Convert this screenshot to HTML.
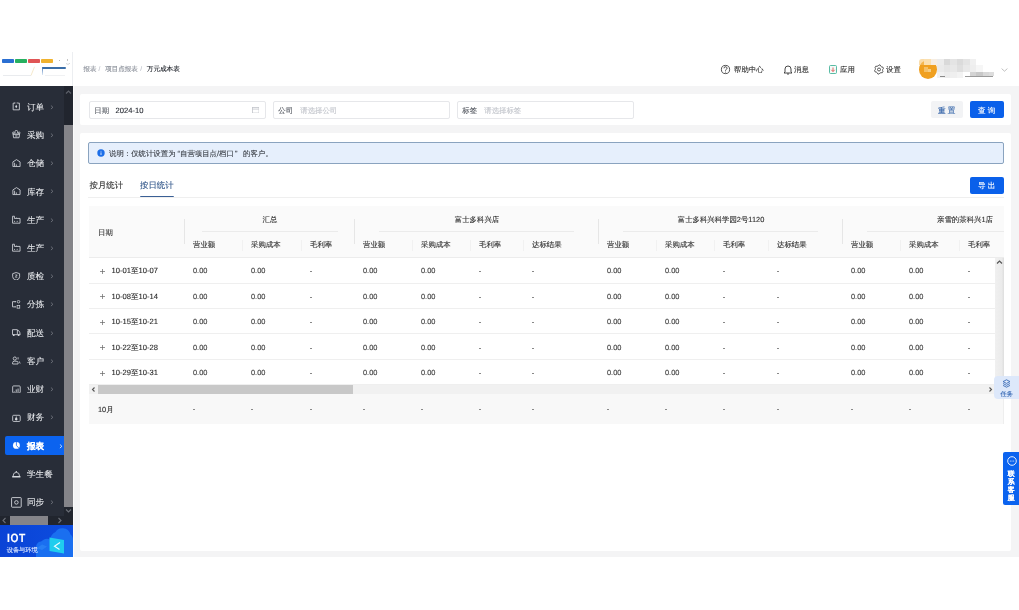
<!DOCTYPE html>
<html><head><meta charset="utf-8"><style>
*{box-sizing:border-box;margin:0;padding:0}
html,body{width:1019px;height:610px;overflow:hidden;background:#fff;font-family:"Liberation Sans",sans-serif;text-rendering:geometricPrecision}
.abs{position:absolute}
.t{position:absolute;white-space:nowrap;line-height:1;-webkit-text-stroke-width:.12px}
</style></head><body><div style="position:absolute;left:0;top:0;width:1019px;height:610px;will-change:transform">

<div class="abs" style="left:0;top:52px;width:73px;height:34px;background:#fff;border-right:1px solid #eceef1"></div>
<div class="abs" style="left:2.0px;top:59px;width:12px;height:3.8px;background:#2a6fd2;border-radius:.8px"></div>
<div class="abs" style="left:15.1px;top:59px;width:12px;height:3.8px;background:#27b060;border-radius:.8px"></div>
<div class="abs" style="left:28.2px;top:59px;width:12px;height:3.8px;background:#e05555;border-radius:.8px"></div>
<div class="abs" style="left:41.3px;top:59px;width:12px;height:3.8px;background:#f0b22e;border-radius:.8px"></div>
<div class="abs" style="left:42.3px;top:67px;width:23.7px;height:1.5px;background:#3a6ea8;border-radius:0 1px 1px 0"></div>
<div class="abs" style="left:41.9px;top:67px;width:1.3px;height:7.5px;background:linear-gradient(#4a7ab8,rgba(90,140,200,.2))"></div>
<div class="abs" style="left:58.6px;top:59.8px;width:1px;height:1.2px;background:#bbb"></div>
<div class="abs" style="left:67.2px;top:58.9px;width:.9px;height:2.6px;background:#c4c4c4"></div>
<svg class="abs" style="left:65px;top:62px" width="6" height="4" viewBox="0 0 6 4"><path d="M1 1.5Q3 3.5 5 1.2" fill="none" stroke="#ccc" stroke-width=".8"/></svg>
<div class="abs" style="left:3px;top:75.3px;width:28px;height:.8px;background:#e9ebee"></div>
<svg class="abs" style="left:30px;top:66px" width="6" height="10" viewBox="0 0 6 10"><path d="M1 9.5 4.5 .8" stroke="#f3e3bf" stroke-width=".8"/></svg>
<div class="abs" style="left:45px;top:75px;width:20px;height:.8px;background:#f0f1f3"></div>
<div class="abs" style="left:73px;top:52px;width:946px;height:34px;background:#fff"></div>
<div class="t" style="left:83.5px;top:66.5px;font-size:6.5px;color:#8a8f99">报表</div>
<div class="t" style="left:98.5px;top:66.5px;font-size:6.5px;color:#c0c4cc">/</div>
<div class="t" style="left:105.3px;top:66.5px;font-size:6.5px;color:#8a8f99">项目点报表</div>
<div class="t" style="left:140.3px;top:66.5px;font-size:6.5px;color:#c0c4cc">/</div>
<div class="t" style="left:146.8px;top:66.5px;font-size:6.6px;color:#1d2129">万元成本表</div>
<svg class="abs" style="left:720px;top:64px" width="11" height="11" viewBox="0 0 11 11"><circle cx="5.5" cy="5.5" r="4.1" fill="none" stroke="#333" stroke-width="0.85"/><path d="M4 4.3a1.5 1.5 0 1 1 2.2 1.3c-.5.3-.7.5-.7 1.1" fill="none" stroke="#333" stroke-width="0.9"/><circle cx="5.5" cy="8" r=".5" fill="#333"/></svg>
<div class="t" style="left:734px;top:65.5px;font-size:7.4px;color:#333">帮助中心</div>
<svg class="abs" style="left:783px;top:64px" width="10" height="11" viewBox="0 0 10 11"><path d="M2 8V5a3 3 0 0 1 6 0v3l1 1H1z" fill="none" stroke="#333" stroke-width="0.9" stroke-linejoin="round"/><path d="M4 10h2" stroke="#333" stroke-width="0.9"/></svg>
<div class="t" style="left:794px;top:65.5px;font-size:7.4px;color:#333">消息</div>
<svg class="abs" style="left:829px;top:65px" width="8" height="9" viewBox="0 0 8 9"><rect x=".5" y=".5" width="7" height="8" rx="1" fill="#f3fbf8" stroke="#46b39a" stroke-width="0.9"/><path d="M4 2.5v4M2.3 4.8 4 6.5l1.7-1.7" fill="none" stroke="#e05555" stroke-width="0.9"/></svg>
<div class="t" style="left:840px;top:65.5px;font-size:7.4px;color:#333">应用</div>
<svg class="abs" style="left:874px;top:64px" width="10" height="11" viewBox="0 0 10 11"><path d="M5.00 0.90 L6.19 1.06 L6.85 2.30 L7.62 2.88 L8.98 3.20 L9.44 4.31 L8.70 5.50 L8.57 6.46 L8.98 7.80 L8.25 8.75 L6.85 8.70 L5.96 9.07 L5.00 10.10 L3.81 9.94 L3.15 8.70 L2.38 8.12 L1.02 7.80 L0.56 6.69 L1.30 5.50 L1.43 4.54 L1.02 3.20 L1.75 2.25 L3.15 2.30 L4.04 1.93z" fill="none" stroke="#333" stroke-width="0.8" stroke-linejoin="round"/><circle cx="5" cy="5.5" r="1.5" fill="none" stroke="#333" stroke-width="0.8"/></svg>
<div class="t" style="left:886px;top:65.5px;font-size:7.4px;color:#333">设置</div>
<div class="abs" style="left:918.5px;top:59.5px;width:18.5px;height:19px;border-radius:50%;background:#f0a020"></div>
<div class="abs" style="left:924px;top:58.5px;width:6.5px;height:6.5px;background:#fbe0b0"></div>
<div class="abs" style="left:930.5px;top:58.5px;width:6.5px;height:6.5px;background:#f6ede2"></div>
<div class="abs" style="left:937px;top:58.5px;width:6.5px;height:6.5px;background:#ececec"></div>
<div class="abs" style="left:943.5px;top:58.5px;width:6.5px;height:6.5px;background:#d9d9d9"></div>
<div class="abs" style="left:950px;top:58.5px;width:6.5px;height:6.5px;background:#e4e4e4"></div>
<div class="abs" style="left:956.5px;top:58.5px;width:6.5px;height:6.5px;background:#dbdbdb"></div>
<div class="abs" style="left:963px;top:58.5px;width:6.5px;height:6.5px;background:#e4e4e4"></div>
<div class="abs" style="left:969.5px;top:58.5px;width:6.5px;height:6.5px;background:#f0f0f0"></div>
<div class="abs" style="left:937px;top:65px;width:6.5px;height:6.5px;background:#eaeaea"></div>
<div class="abs" style="left:943.5px;top:65px;width:6.5px;height:6.5px;background:#e5e5e5"></div>
<div class="abs" style="left:950px;top:65px;width:6.5px;height:6.5px;background:#e8e8e8"></div>
<div class="abs" style="left:956.5px;top:65px;width:6.5px;height:6.5px;background:#dfdfdf"></div>
<div class="abs" style="left:963px;top:65px;width:6.5px;height:6.5px;background:#e9e9e9"></div>
<div class="abs" style="left:969.5px;top:65px;width:6.5px;height:6.5px;background:#eeeeee"></div>
<div class="abs" style="left:976px;top:65px;width:6.5px;height:6.5px;background:#f6f6f6"></div>
<div class="abs" style="left:937px;top:71.5px;width:6.5px;height:6.5px;background:#f1f1f1"></div>
<div class="abs" style="left:943.5px;top:71.5px;width:6.5px;height:6.5px;background:#ececec"></div>
<div class="abs" style="left:950px;top:71.5px;width:6.5px;height:6.5px;background:#efefef"></div>
<div class="abs" style="left:956.5px;top:71.5px;width:6.5px;height:6.5px;background:#f3f3f3"></div>
<div class="abs" style="left:969.5px;top:71.5px;width:6.5px;height:4px;background:#d3d3d3"></div>
<div class="abs" style="left:976px;top:71.5px;width:6.5px;height:4px;background:#c8c8c8"></div>
<div class="abs" style="left:982.5px;top:71.5px;width:6.5px;height:4px;background:#d8d8d8"></div>
<div class="abs" style="left:989px;top:71.5px;width:4.5px;height:4px;background:#dddddd"></div>
<div class="abs" style="left:940px;top:75.5px;width:5px;height:1px;background:#8a8a8a"></div>
<div class="abs" style="left:965px;top:75.5px;width:28px;height:1px;background:#9a9a9a"></div>
<div class="abs" style="left:918.5px;top:59px;width:5.5px;height:6px;background:#f7c56f;border-radius:50% 0 0 0;opacity:.6"></div>
<div class="abs" style="left:924px;top:67px;width:4px;height:5px;background:#f6c878;opacity:.8"></div>
<div class="abs" style="left:928px;top:69px;width:3px;height:3px;background:#f8d89a;opacity:.8"></div>
<svg class="abs" style="left:1000.5px;top:67.5px" width="7" height="4" viewBox="0 0 7 4"><path d="M.6 .6 3.5 3.2 6.4 .6" fill="none" stroke="#b0b0b0" stroke-width=".8"/></svg>
<div class="abs" style="left:0;top:86px;width:73px;height:439px;background:#282d38"></div>
<div class="abs" style="left:64px;top:86px;width:9px;height:430px;background:#21252e"></div>
<div class="abs" style="left:64px;top:125px;width:9px;height:382px;background:#848489"></div>
<svg class="abs" style="left:64px;top:88px" width="9" height="8" viewBox="0 0 9 8"><path d="M2 5.5 4.5 3 7 5.5" fill="none" stroke="#5b5f68" stroke-width="1.2"/></svg>
<svg class="abs" style="left:64px;top:507px" width="9" height="8" viewBox="0 0 9 8"><path d="M2 2.5 4.5 5 7 2.5" fill="none" stroke="#6b6f78" stroke-width="1.2"/></svg>
<div class="abs" style="left:0;top:516px;width:73px;height:9px;background:#21252e"></div>
<div class="abs" style="left:10px;top:516px;width:38px;height:9px;background:#848489"></div>
<svg class="abs" style="left:0;top:516px" width="9" height="9" viewBox="0 0 9 9"><path d="M5.5 2 3 4.5 5.5 7" fill="none" stroke="#6b6f78" stroke-width="1.1"/></svg>
<svg class="abs" style="left:55px;top:516px" width="9" height="9" viewBox="0 0 9 9"><path d="M3.5 2 6 4.5 3.5 7" fill="none" stroke="#6b6f78" stroke-width="1.1"/></svg>
<div class="t" style="left:27px;top:102.7px;font-size:8.6px;color:#eceef1;-webkit-text-stroke:.05px #eceef1">订单</div>
<svg class="abs" style="left:49.8px;top:104.5px" width="4" height="5" viewBox="0 0 4 5"><path d="M.9 .5 2.9 2.3.9 4.1" fill="none" stroke="#7d818a" stroke-width=".75"/></svg>
<svg class="abs" style="left:12.2px;top:102.0px" width="8.8" height="8.8" viewBox="0 0 10 10"><path d="M3.2 1.3H1.3V8.9H8.4V1.3H6.5" fill="none" stroke="#d6d9de" stroke-width=".95" stroke-linejoin="round"/><path d="M3.3.4V1.7M5.9.4V1.7" stroke="#d6d9de" stroke-width=".9"/><path d="M4.8 3.2 6 5.1 4.8 7 3.6 5.1z" fill="#d6d9de"/></svg>
<div class="t" style="left:27px;top:131.0px;font-size:8.6px;color:#eceef1;-webkit-text-stroke:.05px #eceef1">采购</div>
<svg class="abs" style="left:49.8px;top:132.8px" width="4" height="5" viewBox="0 0 4 5"><path d="M.9 .5 2.9 2.3.9 4.1" fill="none" stroke="#7d818a" stroke-width=".75"/></svg>
<svg class="abs" style="left:12.2px;top:130.2px" width="8.8" height="8.8" viewBox="0 0 10 10"><path d="M3.4 3.5V1.7Q3.4.5 4.9.5Q6.4.5 6.4 1.7V3.5" fill="none" stroke="#d6d9de" stroke-width=".95"/><circle cx="1.6" cy="3.3" r="1" fill="none" stroke="#d6d9de" stroke-width=".85"/><circle cx="8.2" cy="3.3" r="1" fill="none" stroke="#d6d9de" stroke-width=".85"/><rect x=".7" y="4.1" width="8.4" height="1.3" fill="#d6d9de"/><path d="M1.3 5.3 1.8 8.8H8L8.5 5.3" fill="none" stroke="#d6d9de" stroke-width=".95" stroke-linejoin="round"/><path d="M3.6 6.3h2.6M3.6 7.6h2.6" stroke="#d6d9de" stroke-width=".6"/></svg>
<div class="t" style="left:27px;top:159.2px;font-size:8.6px;color:#eceef1;-webkit-text-stroke:.05px #eceef1">仓储</div>
<svg class="abs" style="left:49.8px;top:161.0px" width="4" height="5" viewBox="0 0 4 5"><path d="M.9 .5 2.9 2.3.9 4.1" fill="none" stroke="#7d818a" stroke-width=".75"/></svg>
<svg class="abs" style="left:12.2px;top:158.5px" width="8.8" height="8.8" viewBox="0 0 10 10"><path d="M1 8.6V3.3L5.1.7l4.1 2.6v5.3z" fill="none" stroke="#d6d9de" stroke-width=".95" stroke-linejoin="round"/><path d="M2.9 4.3v4M4.9 6.1v2.2" fill="none" stroke="#d6d9de" stroke-width=".9"/></svg>
<div class="t" style="left:27px;top:187.5px;font-size:8.6px;color:#eceef1;-webkit-text-stroke:.05px #eceef1">库存</div>
<svg class="abs" style="left:49.8px;top:189.2px" width="4" height="5" viewBox="0 0 4 5"><path d="M.9 .5 2.9 2.3.9 4.1" fill="none" stroke="#7d818a" stroke-width=".75"/></svg>
<svg class="abs" style="left:12.2px;top:186.8px" width="8.8" height="8.8" viewBox="0 0 10 10"><path d="M1 8.6V3.3L5.1.7l4.1 2.6v5.3z" fill="none" stroke="#d6d9de" stroke-width=".95" stroke-linejoin="round"/><path d="M2.9 4.3v4M4.9 6.1v2.2" fill="none" stroke="#d6d9de" stroke-width=".9"/></svg>
<div class="t" style="left:27px;top:215.7px;font-size:8.6px;color:#eceef1;-webkit-text-stroke:.05px #eceef1">生产</div>
<svg class="abs" style="left:49.8px;top:217.5px" width="4" height="5" viewBox="0 0 4 5"><path d="M.9 .5 2.9 2.3.9 4.1" fill="none" stroke="#7d818a" stroke-width=".75"/></svg>
<svg class="abs" style="left:12.2px;top:215.0px" width="8.8" height="8.8" viewBox="0 0 10 10"><path d="M.65 9.3V1.4h2.1v2.5h6.4v5.4z" fill="none" stroke="#d6d9de" stroke-width=".95" stroke-linejoin="round"/><path d="M4.6 3.9 5.4 3.1 6.2 3.9" fill="none" stroke="#d6d9de" stroke-width=".6"/><circle cx="2.9" cy="7.1" r=".65" fill="#d6d9de"/><circle cx="5.9" cy="7.1" r=".65" fill="#d6d9de"/></svg>
<div class="t" style="left:27px;top:244.0px;font-size:8.6px;color:#eceef1;-webkit-text-stroke:.05px #eceef1">生产</div>
<svg class="abs" style="left:49.8px;top:245.8px" width="4" height="5" viewBox="0 0 4 5"><path d="M.9 .5 2.9 2.3.9 4.1" fill="none" stroke="#7d818a" stroke-width=".75"/></svg>
<svg class="abs" style="left:12.2px;top:243.2px" width="8.8" height="8.8" viewBox="0 0 10 10"><path d="M.65 9.3V1.4h2.1v2.5h6.4v5.4z" fill="none" stroke="#d6d9de" stroke-width=".95" stroke-linejoin="round"/><path d="M4.6 3.9 5.4 3.1 6.2 3.9" fill="none" stroke="#d6d9de" stroke-width=".6"/><circle cx="2.9" cy="7.1" r=".65" fill="#d6d9de"/><circle cx="5.9" cy="7.1" r=".65" fill="#d6d9de"/></svg>
<div class="t" style="left:27px;top:272.2px;font-size:8.6px;color:#eceef1;-webkit-text-stroke:.05px #eceef1">质检</div>
<svg class="abs" style="left:49.8px;top:274.0px" width="4" height="5" viewBox="0 0 4 5"><path d="M.9 .5 2.9 2.3.9 4.1" fill="none" stroke="#7d818a" stroke-width=".75"/></svg>
<svg class="abs" style="left:12.2px;top:271.5px" width="8.8" height="8.8" viewBox="0 0 10 10"><path d="M.75 1.9 4.7.6 8.65 1.9V5.4Q8.65 8.3 4.7 9.3Q.75 8.3.75 5.4z" fill="none" stroke="#d6d9de" stroke-width=".95" stroke-linejoin="round"/><path d="M3.7 3.4H5.9L3.8 5.9H6" fill="none" stroke="#d6d9de" stroke-width=".85" stroke-linejoin="round"/></svg>
<div class="t" style="left:27px;top:300.4px;font-size:8.6px;color:#eceef1;-webkit-text-stroke:.05px #eceef1">分拣</div>
<svg class="abs" style="left:49.8px;top:302.2px" width="4" height="5" viewBox="0 0 4 5"><path d="M.9 .5 2.9 2.3.9 4.1" fill="none" stroke="#7d818a" stroke-width=".75"/></svg>
<svg class="abs" style="left:12.2px;top:299.8px" width="8.8" height="8.8" viewBox="0 0 10 10"><path d="M3.6 1.9H.6V7.8H3.6" fill="none" stroke="#d6d9de" stroke-width=".95"/><circle cx="3.8" cy="1.9" r=".75" fill="#d6d9de"/><circle cx="3.8" cy="7.8" r=".75" fill="#d6d9de"/><circle cx="7.4" cy="1.9" r="1.45" fill="none" stroke="#d6d9de" stroke-width=".85"/><rect x="5.8" y="6.3" width="3" height="3" fill="none" stroke="#d6d9de" stroke-width=".85"/></svg>
<div class="t" style="left:27px;top:328.7px;font-size:8.6px;color:#eceef1;-webkit-text-stroke:.05px #eceef1">配送</div>
<svg class="abs" style="left:49.8px;top:330.5px" width="4" height="5" viewBox="0 0 4 5"><path d="M.9 .5 2.9 2.3.9 4.1" fill="none" stroke="#7d818a" stroke-width=".75"/></svg>
<svg class="abs" style="left:12.2px;top:328.0px" width="8.8" height="8.8" viewBox="0 0 10 10"><path d="M.6 1.9H6.1V7.6H.6z" fill="none" stroke="#d6d9de" stroke-width=".95" stroke-linejoin="round"/><path d="M6.1 2.8H7.4Q9.3 4.6 9.3 7.6H6.1" fill="none" stroke="#d6d9de" stroke-width=".95" stroke-linejoin="round"/><circle cx="2" cy="8.1" r="1" fill="#d6d9de"/><circle cx="7.5" cy="8.1" r="1" fill="#d6d9de"/></svg>
<div class="t" style="left:27px;top:356.9px;font-size:8.6px;color:#eceef1;-webkit-text-stroke:.05px #eceef1">客户</div>
<svg class="abs" style="left:49.8px;top:358.8px" width="4" height="5" viewBox="0 0 4 5"><path d="M.9 .5 2.9 2.3.9 4.1" fill="none" stroke="#7d818a" stroke-width=".75"/></svg>
<svg class="abs" style="left:12.2px;top:356.2px" width="8.8" height="8.8" viewBox="0 0 10 10"><circle cx="3.2" cy="2.9" r="1.8" fill="none" stroke="#d6d9de" stroke-width=".95"/><path d="M.7 9.1V7.6Q.7 5.9 2.6 5.9H4.6Q6.9 5.9 6.9 7.6V9.1z" fill="none" stroke="#d6d9de" stroke-width=".95" stroke-linejoin="round"/><path d="M6.9 1.4V3.9M8.2 6.1 9.3 8.6" fill="none" stroke="#d6d9de" stroke-width=".9"/></svg>
<div class="t" style="left:27px;top:385.2px;font-size:8.6px;color:#eceef1;-webkit-text-stroke:.05px #eceef1">业财</div>
<svg class="abs" style="left:49.8px;top:387.0px" width="4" height="5" viewBox="0 0 4 5"><path d="M.9 .5 2.9 2.3.9 4.1" fill="none" stroke="#7d818a" stroke-width=".75"/></svg>
<svg class="abs" style="left:12.2px;top:384.5px" width="8.8" height="8.8" viewBox="0 0 10 10"><rect x=".75" y="1.05" width="8.6" height="8" rx="1" fill="none" stroke="#d6d9de" stroke-width=".95"/><path d="M2.6 7.9v-.6M4.8 7.9V5M6.9 7.9V4" stroke="#d6d9de" stroke-width="1"/></svg>
<div class="t" style="left:27px;top:413.4px;font-size:8.6px;color:#eceef1;-webkit-text-stroke:.05px #eceef1">财务</div>
<svg class="abs" style="left:49.8px;top:415.2px" width="4" height="5" viewBox="0 0 4 5"><path d="M.9 .5 2.9 2.3.9 4.1" fill="none" stroke="#7d818a" stroke-width=".75"/></svg>
<svg class="abs" style="left:12.2px;top:412.8px" width="8.8" height="8.8" viewBox="0 0 10 10"><rect x=".75" y="2.6" width="8.6" height="7" rx="1.1" fill="none" stroke="#d6d9de" stroke-width=".95"/><path d="M4.8 4.6Q6.3 5.6 6.1 7.1Q5.6 8.4 4.8 8.5Q4 8.4 3.5 7.1Q3.3 5.6 4.8 4.6z" fill="#d6d9de"/><circle cx="4.8" cy="3.9" r=".45" fill="#d6d9de"/></svg>
<div class="abs" style="left:5px;top:436.3px;width:59px;height:18.5px;background:#0b63ef;border-radius:2px 0 0 2px"></div>
<div class="t" style="left:27px;top:441.7px;font-size:8.6px;color:#fff;font-weight:bold">报表</div>
<svg class="abs" style="left:59.0px;top:443.5px" width="4" height="5" viewBox="0 0 4 5"><path d="M.9 .5 2.9 2.3.9 4.1" fill="none" stroke="#fff" stroke-width=".75"/></svg>
<svg class="abs" style="left:12.2px;top:441.0px" width="8.8" height="8.8" viewBox="0 0 10 10"><circle cx="5" cy="5" r="3.9" fill="#fff"/><path d="M5 5V1.1M5 5l2.6 2.9" stroke="#0b63ef" stroke-width=".9"/></svg>
<div class="t" style="left:27px;top:469.9px;font-size:8.6px;color:#eceef1;-webkit-text-stroke:.05px #eceef1">学生餐</div>
<svg class="abs" style="left:12.2px;top:469.2px" width="8.8" height="8.8" viewBox="0 0 10 10"><path d="M1.2 8.3Q1.2 3.8 4.9 3.8Q8.6 3.8 8.6 8.3" fill="none" stroke="#d6d9de" stroke-width=".95"/><rect x=".2" y="8" width="9.4" height="1.7" rx=".3" fill="#d6d9de"/><circle cx="4.9" cy="3" r=".85" fill="#d6d9de"/></svg>
<div class="t" style="left:27px;top:498.2px;font-size:8.6px;color:#eceef1;-webkit-text-stroke:.05px #eceef1">同步</div>
<svg class="abs" style="left:49.8px;top:500.0px" width="4" height="5" viewBox="0 0 4 5"><path d="M.9 .5 2.9 2.3.9 4.1" fill="none" stroke="#7d818a" stroke-width=".75"/></svg>
<svg class="abs" style="left:11px;top:496.9px" width="10.8" height="10.8" viewBox="0 0 11 11"><rect x=".6" y=".6" width="9.8" height="9.8" rx=".6" fill="none" stroke="#d6d9de" stroke-width=".9"/><circle cx="5.5" cy="5.5" r="1.8" fill="none" stroke="#d6d9de" stroke-width=".9"/></svg>
<div class="abs" style="left:0;top:525px;width:73px;height:32px;background:linear-gradient(90deg,#0a43d6,#0d4ddf)"></div>
<svg class="abs" style="left:35px;top:527px" width="38" height="30" viewBox="0 0 38 30"><path d="M1 30V21Q1 15 6 14.5L9 12.5Q12 11 15 12.5Q16 7 20.5 5Q22.5 .8 28 1.2Q34 1.8 35.5 7.5Q38 9 38 13V30z" fill="#1a6ff0"/><path d="M2 21 7 17.5 12 19.5 7 23z" fill="#2a83f5" opacity=".8"/><path d="M14.5 10.5 29 13v13.5L14.5 24z" fill="#1fcdee"/><path d="M25 15.5 19.5 19.2 24.5 22.5" fill="none" stroke="#e8fbff" stroke-width="1.2"/></svg>
<div class="t" style="left:6.8px;top:532.3px;font-size:12px;font-weight:bold;color:#fff;letter-spacing:.7px;transform:scaleX(.85);transform-origin:0 0">IOT</div>
<div class="t" style="left:6.7px;top:548.1px;font-size:6.2px;color:#d8e4ff">设备与环境</div>
<div class="abs" style="left:73px;top:86px;width:946px;height:471px;background:#f4f4f5;border-left:1px solid #fbfbfb"></div>
<div class="abs" style="left:80px;top:94px;width:931px;height:31px;background:#fff;border-radius:2px"></div>
<div class="abs" style="left:89px;top:101px;width:177px;height:18px;border:1px solid #e6e7ea;border-radius:2px;background:#fff"></div>
<div class="t" style="left:94.3px;top:107.2px;font-size:7.4px;color:#5c6068">日期</div>
<div class="t" style="left:115.6px;top:107px;font-size:7.6px;color:#2a2e36">2024-10</div>
<div class="abs" style="left:273px;top:101px;width:177px;height:18px;border:1px solid #e6e7ea;border-radius:2px;background:#fff"></div>
<div class="t" style="left:278.3px;top:107.2px;font-size:7.4px;color:#5c6068">公司</div>
<div class="t" style="left:300.3px;top:107.2px;font-size:7.4px;color:#c4c7cd">请选择公司</div>
<div class="abs" style="left:457px;top:101px;width:177px;height:18px;border:1px solid #e6e7ea;border-radius:2px;background:#fff"></div>
<div class="t" style="left:462.3px;top:107.2px;font-size:7.4px;color:#5c6068">标签</div>
<div class="t" style="left:484.3px;top:107.2px;font-size:7.4px;color:#c4c7cd">请选择标签</div>
<svg class="abs" style="left:251.5px;top:106.5px" width="7.5" height="6.5" viewBox="0 0 7.5 6.5"><rect x=".45" y=".45" width="6.6" height="5.6" fill="none" stroke="#c2c5cb" stroke-width=".8"/><path d="M.5 2.1h6.5" stroke="#c2c5cb" stroke-width=".8"/></svg>
<div class="abs" style="left:931px;top:101px;width:32px;height:17px;background:#f2f3f5;border-radius:2px"></div>
<div class="t" style="left:938px;top:107px;font-size:7.6px;color:#2d5fa6;letter-spacing:2.2px">重置</div>
<div class="abs" style="left:970px;top:101px;width:34px;height:17px;background:#0a60ea;border-radius:2px"></div>
<div class="t" style="left:978px;top:107px;font-size:7.6px;color:#fff;letter-spacing:2.2px">查询</div>
<div class="abs" style="left:80px;top:133px;width:931px;height:418px;background:#fff;border-radius:2px"></div>
<div class="abs" style="left:88px;top:142px;width:916px;height:22px;background:#e6effc;border:1px solid #8aa3bf;border-radius:2px"></div>
<svg class="abs" style="left:96.8px;top:149px" width="8" height="8" viewBox="0 0 8 8"><circle cx="4" cy="4" r="3.7" fill="#1c6ee8"/><path d="M4 3.4v2.6" stroke="#fff" stroke-width=".8"/><circle cx="4" cy="2.3" r=".45" fill="#fff"/></svg>
<div class="t" style="left:109px;top:150px;font-size:7.4px;color:#3c4048">说明：仅统计设置为<span style="margin-left:2px;margin-right:0px">“</span>自营项目点/档口<span style="margin-left:1.3px;margin-right:5.5px">”</span>的客户。</div>
<div class="t" style="left:89.5px;top:181px;font-size:8.4px;color:#333">按月统计</div>
<div class="t" style="left:140px;top:181px;font-size:8.4px;color:#365a8c">按日统计</div>
<div class="abs" style="left:140px;top:196px;width:34px;height:2px;background:#3a5f95;border-radius:1px"></div>
<div class="abs" style="left:88px;top:197px;width:916px;height:1px;background:#efefef"></div>
<div class="abs" style="left:970px;top:177px;width:34px;height:17px;background:#0a60ea;border-radius:2px"></div>
<div class="t" style="left:978px;top:182px;font-size:7.6px;color:#fff;letter-spacing:2.2px">导出</div>
<div class="abs" style="left:89px;top:206px;width:915px;height:52px;background:#fafafa;border-bottom:1px solid #ececec"></div>
<div class="t" style="left:98px;top:228.5px;font-size:7.4px;color:#333">日期</div>
<div class="abs" style="left:89px;top:206px;width:915px;height:51px;overflow:hidden">
<div class="abs" style="left:95px;top:13px;width:1px;height:25px;background:#e6e6e6"></div>
<div class="t" style="left:96px;width:170px;text-align:center;top:10px;font-size:7.4px;color:#333">汇总</div>
<div class="abs" style="left:113px;top:25px;width:136px;height:1px;background:#ebebeb"></div>
<div class="t" style="left:104px;top:35.1px;font-size:7.4px;color:#333">营业额</div>
<div class="abs" style="left:153px;top:34px;width:1px;height:11px;background:#f1f1f1"></div>
<div class="t" style="left:162px;top:35.1px;font-size:7.4px;color:#333">采购成本</div>
<div class="abs" style="left:212px;top:34px;width:1px;height:11px;background:#f1f1f1"></div>
<div class="t" style="left:221px;top:35.1px;font-size:7.4px;color:#333">毛利率</div>
<div class="abs" style="left:265px;top:13px;width:1px;height:25px;background:#e6e6e6"></div>
<div class="t" style="left:266px;width:244px;text-align:center;top:10px;font-size:7.4px;color:#333">富士多科兴店</div>
<div class="abs" style="left:290px;top:25px;width:195px;height:1px;background:#ebebeb"></div>
<div class="t" style="left:274px;top:35.1px;font-size:7.4px;color:#333">营业额</div>
<div class="abs" style="left:323px;top:34px;width:1px;height:11px;background:#f1f1f1"></div>
<div class="t" style="left:332px;top:35.1px;font-size:7.4px;color:#333">采购成本</div>
<div class="abs" style="left:381px;top:34px;width:1px;height:11px;background:#f1f1f1"></div>
<div class="t" style="left:390px;top:35.1px;font-size:7.4px;color:#333">毛利率</div>
<div class="abs" style="left:434px;top:34px;width:1px;height:11px;background:#f1f1f1"></div>
<div class="t" style="left:443px;top:35.1px;font-size:7.4px;color:#333">达标结果</div>
<div class="abs" style="left:509px;top:13px;width:1px;height:25px;background:#e6e6e6"></div>
<div class="t" style="left:510px;width:244px;text-align:center;top:10px;font-size:7.4px;color:#333">富士多科兴科学园2号1120</div>
<div class="abs" style="left:534px;top:25px;width:195px;height:1px;background:#ebebeb"></div>
<div class="t" style="left:518px;top:35.1px;font-size:7.4px;color:#333">营业额</div>
<div class="abs" style="left:567px;top:34px;width:1px;height:11px;background:#f1f1f1"></div>
<div class="t" style="left:576px;top:35.1px;font-size:7.4px;color:#333">采购成本</div>
<div class="abs" style="left:625px;top:34px;width:1px;height:11px;background:#f1f1f1"></div>
<div class="t" style="left:634px;top:35.1px;font-size:7.4px;color:#333">毛利率</div>
<div class="abs" style="left:679px;top:34px;width:1px;height:11px;background:#f1f1f1"></div>
<div class="t" style="left:688px;top:35.1px;font-size:7.4px;color:#333">达标结果</div>
<div class="abs" style="left:753px;top:13px;width:1px;height:25px;background:#e6e6e6"></div>
<div class="t" style="left:754px;width:244px;text-align:center;top:10px;font-size:7.4px;color:#333">亲雪的茶科兴1店</div>
<div class="abs" style="left:778px;top:25px;width:195px;height:1px;background:#ebebeb"></div>
<div class="t" style="left:762px;top:35.1px;font-size:7.4px;color:#333">营业额</div>
<div class="abs" style="left:811px;top:34px;width:1px;height:11px;background:#f1f1f1"></div>
<div class="t" style="left:820px;top:35.1px;font-size:7.4px;color:#333">采购成本</div>
<div class="abs" style="left:870px;top:34px;width:1px;height:11px;background:#f1f1f1"></div>
<div class="t" style="left:879px;top:35.1px;font-size:7.4px;color:#333">毛利率</div>
</div>
<div class="abs" style="left:89px;top:258px;width:906px;height:127px;overflow:hidden;background:#fff">
<div class="abs" style="left:0;top:25px;width:906px;height:1px;background:#efefef"></div>
<svg class="abs" style="left:10.5px;top:10.9px" width="5" height="5" viewBox="0 0 5 5"><path d="M2.5 0v5M0 2.5h5" stroke="#666" stroke-width=".7"/></svg>
<div class="t" style="left:22.5px;top:9.1px;font-size:7.6px;color:#2b2b2b">10-01至10-07</div>
<div class="t" style="left:104px;top:9.2px;font-size:7.4px;color:#444">0.00</div>
<div class="t" style="left:162px;top:9.2px;font-size:7.4px;color:#444">0.00</div>
<div class="abs" style="left:221.2px;top:13.0px;width:2.2px;height:1px;background:#888"></div>
<div class="t" style="left:274px;top:9.2px;font-size:7.4px;color:#444">0.00</div>
<div class="t" style="left:332px;top:9.2px;font-size:7.4px;color:#444">0.00</div>
<div class="abs" style="left:390.2px;top:13.0px;width:2.2px;height:1px;background:#888"></div>
<div class="abs" style="left:443.2px;top:13.0px;width:2.2px;height:1px;background:#888"></div>
<div class="t" style="left:518px;top:9.2px;font-size:7.4px;color:#444">0.00</div>
<div class="t" style="left:576px;top:9.2px;font-size:7.4px;color:#444">0.00</div>
<div class="abs" style="left:634.2px;top:13.0px;width:2.2px;height:1px;background:#888"></div>
<div class="abs" style="left:688.2px;top:13.0px;width:2.2px;height:1px;background:#888"></div>
<div class="t" style="left:762px;top:9.2px;font-size:7.4px;color:#444">0.00</div>
<div class="t" style="left:820px;top:9.2px;font-size:7.4px;color:#444">0.00</div>
<div class="abs" style="left:879.2px;top:13.0px;width:2.2px;height:1px;background:#888"></div>
<div class="abs" style="left:0;top:50px;width:906px;height:1px;background:#efefef"></div>
<svg class="abs" style="left:10.5px;top:36.4px" width="5" height="5" viewBox="0 0 5 5"><path d="M2.5 0v5M0 2.5h5" stroke="#666" stroke-width=".7"/></svg>
<div class="t" style="left:22.5px;top:34.6px;font-size:7.6px;color:#2b2b2b">10-08至10-14</div>
<div class="t" style="left:104px;top:34.7px;font-size:7.4px;color:#444">0.00</div>
<div class="t" style="left:162px;top:34.7px;font-size:7.4px;color:#444">0.00</div>
<div class="abs" style="left:221.2px;top:38.5px;width:2.2px;height:1px;background:#888"></div>
<div class="t" style="left:274px;top:34.7px;font-size:7.4px;color:#444">0.00</div>
<div class="t" style="left:332px;top:34.7px;font-size:7.4px;color:#444">0.00</div>
<div class="abs" style="left:390.2px;top:38.5px;width:2.2px;height:1px;background:#888"></div>
<div class="abs" style="left:443.2px;top:38.5px;width:2.2px;height:1px;background:#888"></div>
<div class="t" style="left:518px;top:34.7px;font-size:7.4px;color:#444">0.00</div>
<div class="t" style="left:576px;top:34.7px;font-size:7.4px;color:#444">0.00</div>
<div class="abs" style="left:634.2px;top:38.5px;width:2.2px;height:1px;background:#888"></div>
<div class="abs" style="left:688.2px;top:38.5px;width:2.2px;height:1px;background:#888"></div>
<div class="t" style="left:762px;top:34.7px;font-size:7.4px;color:#444">0.00</div>
<div class="t" style="left:820px;top:34.7px;font-size:7.4px;color:#444">0.00</div>
<div class="abs" style="left:879.2px;top:38.5px;width:2.2px;height:1px;background:#888"></div>
<div class="abs" style="left:0;top:75px;width:906px;height:1px;background:#efefef"></div>
<svg class="abs" style="left:10.5px;top:61.9px" width="5" height="5" viewBox="0 0 5 5"><path d="M2.5 0v5M0 2.5h5" stroke="#666" stroke-width=".7"/></svg>
<div class="t" style="left:22.5px;top:60.1px;font-size:7.6px;color:#2b2b2b">10-15至10-21</div>
<div class="t" style="left:104px;top:60.2px;font-size:7.4px;color:#444">0.00</div>
<div class="t" style="left:162px;top:60.2px;font-size:7.4px;color:#444">0.00</div>
<div class="abs" style="left:221.2px;top:64.0px;width:2.2px;height:1px;background:#888"></div>
<div class="t" style="left:274px;top:60.2px;font-size:7.4px;color:#444">0.00</div>
<div class="t" style="left:332px;top:60.2px;font-size:7.4px;color:#444">0.00</div>
<div class="abs" style="left:390.2px;top:64.0px;width:2.2px;height:1px;background:#888"></div>
<div class="abs" style="left:443.2px;top:64.0px;width:2.2px;height:1px;background:#888"></div>
<div class="t" style="left:518px;top:60.2px;font-size:7.4px;color:#444">0.00</div>
<div class="t" style="left:576px;top:60.2px;font-size:7.4px;color:#444">0.00</div>
<div class="abs" style="left:634.2px;top:64.0px;width:2.2px;height:1px;background:#888"></div>
<div class="abs" style="left:688.2px;top:64.0px;width:2.2px;height:1px;background:#888"></div>
<div class="t" style="left:762px;top:60.2px;font-size:7.4px;color:#444">0.00</div>
<div class="t" style="left:820px;top:60.2px;font-size:7.4px;color:#444">0.00</div>
<div class="abs" style="left:879.2px;top:64.0px;width:2.2px;height:1px;background:#888"></div>
<div class="abs" style="left:0;top:101px;width:906px;height:1px;background:#efefef"></div>
<svg class="abs" style="left:10.5px;top:87.4px" width="5" height="5" viewBox="0 0 5 5"><path d="M2.5 0v5M0 2.5h5" stroke="#666" stroke-width=".7"/></svg>
<div class="t" style="left:22.5px;top:85.6px;font-size:7.6px;color:#2b2b2b">10-22至10-28</div>
<div class="t" style="left:104px;top:85.7px;font-size:7.4px;color:#444">0.00</div>
<div class="t" style="left:162px;top:85.7px;font-size:7.4px;color:#444">0.00</div>
<div class="abs" style="left:221.2px;top:89.5px;width:2.2px;height:1px;background:#888"></div>
<div class="t" style="left:274px;top:85.7px;font-size:7.4px;color:#444">0.00</div>
<div class="t" style="left:332px;top:85.7px;font-size:7.4px;color:#444">0.00</div>
<div class="abs" style="left:390.2px;top:89.5px;width:2.2px;height:1px;background:#888"></div>
<div class="abs" style="left:443.2px;top:89.5px;width:2.2px;height:1px;background:#888"></div>
<div class="t" style="left:518px;top:85.7px;font-size:7.4px;color:#444">0.00</div>
<div class="t" style="left:576px;top:85.7px;font-size:7.4px;color:#444">0.00</div>
<div class="abs" style="left:634.2px;top:89.5px;width:2.2px;height:1px;background:#888"></div>
<div class="abs" style="left:688.2px;top:89.5px;width:2.2px;height:1px;background:#888"></div>
<div class="t" style="left:762px;top:85.7px;font-size:7.4px;color:#444">0.00</div>
<div class="t" style="left:820px;top:85.7px;font-size:7.4px;color:#444">0.00</div>
<div class="abs" style="left:879.2px;top:89.5px;width:2.2px;height:1px;background:#888"></div>
<div class="abs" style="left:0;top:126px;width:906px;height:1px;background:#efefef"></div>
<svg class="abs" style="left:10.5px;top:112.9px" width="5" height="5" viewBox="0 0 5 5"><path d="M2.5 0v5M0 2.5h5" stroke="#666" stroke-width=".7"/></svg>
<div class="t" style="left:22.5px;top:111.1px;font-size:7.6px;color:#2b2b2b">10-29至10-31</div>
<div class="t" style="left:104px;top:111.2px;font-size:7.4px;color:#444">0.00</div>
<div class="t" style="left:162px;top:111.2px;font-size:7.4px;color:#444">0.00</div>
<div class="abs" style="left:221.2px;top:115.0px;width:2.2px;height:1px;background:#888"></div>
<div class="t" style="left:274px;top:111.2px;font-size:7.4px;color:#444">0.00</div>
<div class="t" style="left:332px;top:111.2px;font-size:7.4px;color:#444">0.00</div>
<div class="abs" style="left:390.2px;top:115.0px;width:2.2px;height:1px;background:#888"></div>
<div class="abs" style="left:443.2px;top:115.0px;width:2.2px;height:1px;background:#888"></div>
<div class="t" style="left:518px;top:111.2px;font-size:7.4px;color:#444">0.00</div>
<div class="t" style="left:576px;top:111.2px;font-size:7.4px;color:#444">0.00</div>
<div class="abs" style="left:634.2px;top:115.0px;width:2.2px;height:1px;background:#888"></div>
<div class="abs" style="left:688.2px;top:115.0px;width:2.2px;height:1px;background:#888"></div>
<div class="t" style="left:762px;top:111.2px;font-size:7.4px;color:#444">0.00</div>
<div class="t" style="left:820px;top:111.2px;font-size:7.4px;color:#444">0.00</div>
<div class="abs" style="left:879.2px;top:115.0px;width:2.2px;height:1px;background:#888"></div>
</div>
<div class="abs" style="left:995px;top:258px;width:9px;height:127px;background:linear-gradient(90deg,#f0f0f0,#ebebeb 75%,#dedede)"></div>
<svg class="abs" style="left:995px;top:258px" width="9" height="8" viewBox="0 0 9 8"><path d="M2 5.5 4.5 3 7 5.5" fill="none" stroke="#555" stroke-width="1.2"/></svg>
<div class="abs" style="left:89px;top:385px;width:906px;height:9px;background:#f1f1f1"></div>
<div class="abs" style="left:98px;top:385px;width:255px;height:9px;background:#c8c8c8"></div>
<svg class="abs" style="left:89px;top:385px" width="9" height="9" viewBox="0 0 9 9"><path d="M5.5 2.5 3.5 4.5 5.5 6.5" fill="none" stroke="#555" stroke-width="1.1"/></svg>
<svg class="abs" style="left:986px;top:385px" width="9" height="9" viewBox="0 0 9 9"><path d="M3.5 2.5 5.5 4.5 3.5 6.5" fill="none" stroke="#555" stroke-width="1.1"/></svg>
<div class="abs" style="left:89px;top:394px;width:915px;height:30px;background:#f8f8f8;border-right:1px solid #eeeeee"></div>
<div class="abs" style="left:995px;top:385px;width:9px;height:9px;background:#f6f6f6"></div>
<div class="t" style="left:98px;top:405.5px;font-size:7.4px;color:#333">10月</div>
<div class="abs" style="left:193.2px;top:408.5px;width:2.2px;height:1px;background:#8a8a8a"></div>
<div class="abs" style="left:251.2px;top:408.5px;width:2.2px;height:1px;background:#8a8a8a"></div>
<div class="abs" style="left:310.2px;top:408.5px;width:2.2px;height:1px;background:#8a8a8a"></div>
<div class="abs" style="left:363.2px;top:408.5px;width:2.2px;height:1px;background:#8a8a8a"></div>
<div class="abs" style="left:421.2px;top:408.5px;width:2.2px;height:1px;background:#8a8a8a"></div>
<div class="abs" style="left:479.2px;top:408.5px;width:2.2px;height:1px;background:#8a8a8a"></div>
<div class="abs" style="left:532.2px;top:408.5px;width:2.2px;height:1px;background:#8a8a8a"></div>
<div class="abs" style="left:607.2px;top:408.5px;width:2.2px;height:1px;background:#8a8a8a"></div>
<div class="abs" style="left:665.2px;top:408.5px;width:2.2px;height:1px;background:#8a8a8a"></div>
<div class="abs" style="left:723.2px;top:408.5px;width:2.2px;height:1px;background:#8a8a8a"></div>
<div class="abs" style="left:777.2px;top:408.5px;width:2.2px;height:1px;background:#8a8a8a"></div>
<div class="abs" style="left:851.2px;top:408.5px;width:2.2px;height:1px;background:#8a8a8a"></div>
<div class="abs" style="left:909.2px;top:408.5px;width:2.2px;height:1px;background:#8a8a8a"></div>
<div class="abs" style="left:968.2px;top:408.5px;width:2.2px;height:1px;background:#8a8a8a"></div>
<div class="abs" style="left:994px;top:376px;width:25px;height:23px;background:#dde8fa;border-radius:4px 0 0 4px"></div>
<svg class="abs" style="left:1002px;top:378.5px" width="9" height="9" viewBox="0 0 9 9"><path d="M4.5 .8 8 2.6 4.5 4.4 1 2.6z M1 4.5 4.5 6.3 8 4.5 M1 6.4 4.5 8.2 8 6.4" fill="none" stroke="#3366b3" stroke-width=".85" stroke-linejoin="round"/></svg>
<div class="t" style="left:1000.5px;top:392px;font-size:6.2px;color:#3366b3">任务</div>
<div class="abs" style="left:1003px;top:452px;width:16px;height:53px;background:#0b63ef;border-radius:2px 0 0 2px"></div>
<svg class="abs" style="left:1006.5px;top:456px" width="10" height="10" viewBox="0 0 10 10"><circle cx="5" cy="5" r="4.3" fill="none" stroke="#fff" stroke-width=".9"/><circle cx="3.3" cy="5" r=".5" fill="#fff"/><circle cx="5" cy="5" r=".5" fill="#fff"/><circle cx="6.7" cy="5" r=".5" fill="#fff"/></svg>
<div class="t" style="left:1007.8px;top:471.6px;font-size:6.9px;color:#fff;font-weight:bold">联</div>
<div class="t" style="left:1007.8px;top:479.8px;font-size:6.9px;color:#fff;font-weight:bold">系</div>
<div class="t" style="left:1007.8px;top:488.0px;font-size:6.9px;color:#fff;font-weight:bold">客</div>
<div class="t" style="left:1007.8px;top:496.2px;font-size:6.9px;color:#fff;font-weight:bold">服</div>
</div></body></html>
